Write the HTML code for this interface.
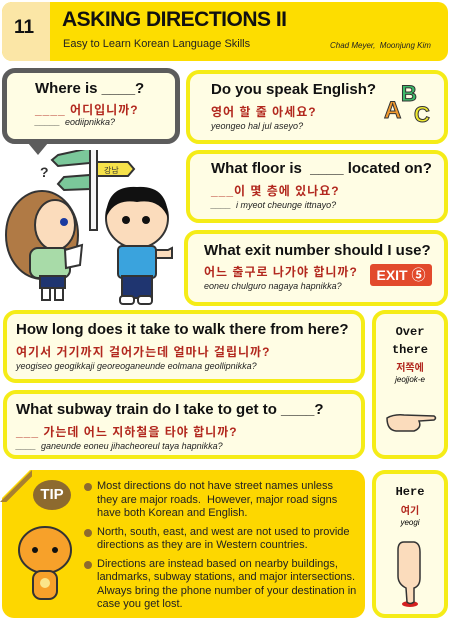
<!DOCTYPE html>
<html><head><meta charset="utf-8"><style>
body{margin:0;width:450px;height:621px;background:#fff;position:relative;overflow:hidden;font-family:"Liberation Sans","Noto Sans CJK KR",sans-serif}
.a{position:absolute;box-sizing:border-box}
.card{position:absolute;box-sizing:border-box;background:#fffde4;border:4px solid #f5ec17;border-radius:13px}
.en{position:absolute;font-weight:bold;color:#111;white-space:nowrap}
.ko{position:absolute;color:#b2281e;font-size:12px;white-space:nowrap;letter-spacing:1px;font-weight:bold}
.ro{position:absolute;font-style:italic;font-size:9px;color:#222;white-space:nowrap}
.mono{font-family:"Liberation Mono",monospace;font-weight:bold}
</style></head><body>
<div class="a" style="left:2px;top:2px;width:446px;height:59px;background:#fddd00;border-radius:10px"></div>
<div class="a" style="left:2px;top:2px;width:48px;height:59px;background:#fbe6a6;border-radius:10px 0 0 10px"></div>
<div class="en" style="left:14px;top:17px;font-size:19px">11</div>
<div class="en" style="left:62px;top:8px;font-size:21px;letter-spacing:-0.5px">ASKING DIRECTIONS II</div>
<div class="a" style="left:63px;top:38px;font-size:11px;color:#222">Easy to Learn Korean Language Skills</div>
<div class="a" style="left:330px;top:41px;font-size:8px;font-style:italic;color:#222">Chad Meyer,&nbsp; Moonjung Kim</div>

<div class="card" style="left:2px;top:68px;width:178px;height:76px;border:5px solid #5c5c5c;background:#fffde4"></div>
<div class="a" style="left:28px;top:143px;width:0;height:0;border-left:10px solid transparent;border-right:10px solid transparent;border-top:12px solid #5c5c5c"></div>
<div class="en" style="left:35px;top:80px;font-size:15px">Where is ____?</div>
<div class="ko" style="left:35px;top:101px">____ 어디입니까?</div>
<div class="ro" style="left:35px;top:117px">_____&nbsp; eodiipnikka?</div>

<div class="card" style="left:186px;top:70px;width:262px;height:74px"></div>
<div class="en" style="left:211px;top:81px;font-size:15px">Do you speak English?</div>
<div class="ko" style="left:211px;top:103px">영어 할 줄 아세요?</div>
<div class="ro" style="left:211px;top:121px">yeongeo hal jul aseyo?</div>
<div class="en" style="left:384px;top:97px;font-size:24px;color:#f29a2e;-webkit-text-stroke:1px #333">A</div>
<div class="en" style="left:401px;top:81px;font-size:22px;color:#3dbb6a;-webkit-text-stroke:1px #333">B</div>
<div class="en" style="left:414px;top:102px;font-size:22px;color:#f0ea30;-webkit-text-stroke:1px #333">C</div>

<div class="card" style="left:186px;top:150px;width:262px;height:73px"></div>
<div class="en" style="left:211px;top:160px;font-size:15px">What floor is &nbsp;____ located on?</div>
<div class="ko" style="left:211px;top:182px">___이 몇 층에 있나요?</div>
<div class="ro" style="left:211px;top:200px">____&nbsp; i myeot cheunge ittnayo?</div>

<div class="card" style="left:184px;top:230px;width:264px;height:76px"></div>
<div class="en" style="left:204px;top:242px;font-size:15px">What exit number should I use?</div>
<div class="ko" style="left:204px;top:263px">어느 출구로 나가야 합니까?</div>
<div class="ro" style="left:204px;top:281px">eoneu chulguro nagaya hapnikka?</div>
<div class="a" style="left:370px;top:264px;width:62px;height:22px;background:#e24a2c;border-radius:3px;color:#fff;font-weight:bold;font-size:14px;text-align:center;line-height:22px">EXIT ⑤</div>

<svg class="a" style="left:0;top:150px" width="180" height="160" viewBox="0 0 180 160">
<rect x="90" y="-10" width="7" height="90" fill="#f5f5f5" stroke="#333" stroke-width="2"/>
<path d="M58 5 L90 -2 L90 13 L58 16 L52 10Z" fill="#7bc79a" stroke="#333" stroke-width="2"/>
<path d="M97 12 L128 12 L134 19 L128 26 L97 26Z" fill="#f6e24a" stroke="#333" stroke-width="2"/>
<text x="104" y="23" font-size="8" fill="#333" font-family="Noto Sans CJK KR">강남</text>
<path d="M64 27 L90 25 L90 39 L64 40 L58 34Z" fill="#7bc79a" stroke="#333" stroke-width="2"/>
<text x="40" y="27" font-size="14" font-weight="bold" fill="#333">?</text>
<ellipse cx="42" cy="85" rx="36" ry="44" fill="#b07a45" stroke="#333" stroke-width="2"/>
<ellipse cx="55" cy="75" rx="20" ry="25" fill="#fbdcbc" stroke="#333" stroke-width="2"/>
<circle cx="64" cy="72" r="4" fill="#1a3aa0"/>
<rect x="30" y="98" width="40" height="30" rx="8" fill="#a8dba8" stroke="#333" stroke-width="2"/>
<rect x="40" y="126" width="25" height="12" fill="#1f3570" stroke="#333" stroke-width="2"/>
<rect x="42" y="138" width="8" height="12" fill="#fff" stroke="#333" stroke-width="2"/>
<rect x="55" y="138" width="8" height="12" fill="#fff" stroke="#333" stroke-width="2"/>
<path d="M65 100 L82 95 L80 115 L66 118Z" fill="#fff" stroke="#333" stroke-width="2"/>
<ellipse cx="137" cy="68" rx="31" ry="30" fill="#fbdcbc" stroke="#333" stroke-width="2"/>
<path d="M106 68 Q106 35 137 37 Q168 35 168 68 Q160 48 137 52 Q114 48 106 68Z" fill="#111"/>
<circle cx="126" cy="70" r="4" fill="#111"/><circle cx="146" cy="70" r="4" fill="#111"/>
<rect x="118" y="96" width="38" height="32" rx="4" fill="#3aa3dd" stroke="#333" stroke-width="2"/>
<path d="M156 100 L168 100 L172 98 L172 108 L156 108Z" fill="#fbdcbc" stroke="#333" stroke-width="2"/>
<rect x="122" y="126" width="30" height="22" fill="#1f3570" stroke="#333" stroke-width="2"/>
<rect x="120" y="146" width="14" height="8" rx="3" fill="#fff" stroke="#333" stroke-width="2"/>
<rect x="138" y="146" width="14" height="8" rx="3" fill="#fff" stroke="#333" stroke-width="2"/>
</svg>

<div class="card" style="left:3px;top:310px;width:362px;height:73px"></div>
<div class="en" style="left:16px;top:321px;font-size:15px">How long does it take to walk there from here?</div>
<div class="ko" style="left:16px;top:343px">여기서 거기까지 걸어가는데 얼마나 걸립니까?</div>
<div class="ro" style="left:16px;top:361px">yeogiseo geogikkaji georeoganeunde eolmana geollipnikka?</div>

<div class="card" style="left:3px;top:390px;width:362px;height:69px"></div>
<div class="en" style="left:16px;top:401px;font-size:15px">What subway train do I take to get to ____?</div>
<div class="ko" style="left:16px;top:423px">___ 가는데 어느 지하철을 타야 합니까?</div>
<div class="ro" style="left:16px;top:441px">____&nbsp; ganeunde eoneu jihacheoreul taya hapnikka?</div>

<div class="card" style="left:372px;top:310px;width:76px;height:149px"></div>
<div class="a mono" style="left:372px;top:323px;width:76px;text-align:center;font-size:12px;line-height:18px;color:#111">Over<br>there</div>
<div class="a" style="left:372px;top:359px;width:76px;text-align:center;font-size:10px;color:#b2281e;font-weight:bold">저쪽에</div>
<div class="a" style="left:372px;top:375px;width:76px;text-align:center;font-size:8px;font-style:italic">jeojjok-e</div>
<svg class="a" style="left:384px;top:410px" width="55" height="25"><path d="M3 8 Q10 4 20 5 L50 6 Q53 8 50 10 L35 11 Q38 18 30 21 L12 21 Q3 20 3 8Z" fill="#fbdcbc" stroke="#333" stroke-width="1.5"/></svg>

<div class="a" style="left:2px;top:470px;width:363px;height:148px;background:#fdd700;border-radius:12px"></div>
<div class="a" style="left:0;top:470px;width:30px;height:30px;background:#fff;clip-path:polygon(0 0,100% 0,0 100%)"></div>
<div class="a" style="left:0;top:470px;width:32px;height:32px;background:#a88030;clip-path:polygon(100% 0,0 100%,20% 100%,100% 20%)"></div>
<div class="a" style="left:33px;top:480px;width:38px;height:30px;background:#8d6a2f;border-radius:50%;color:#fff;font-weight:bold;font-size:15px;text-align:center;line-height:30px">TIP</div>
<svg class="a" style="left:15px;top:515px" width="60" height="100">
<ellipse cx="30" cy="35" rx="26" ry="23" fill="#f7a12a" stroke="#333" stroke-width="2"/>
<circle cx="20" cy="35" r="3" fill="#111"/><circle cx="40" cy="35" r="3" fill="#111"/>
<rect x="18" y="56" width="24" height="28" rx="8" fill="#f7a12a" stroke="#333" stroke-width="2"/>
<circle cx="30" cy="68" r="5" fill="#fbe58a"/>
</svg>
<div class="a" style="left:84px;top:480px;width:278px;font-size:11px;line-height:13.5px;color:#222">
<div style="position:relative;padding-left:13px;margin-bottom:5px"><span style="position:absolute;left:0;top:3px;width:8px;height:8px;border-radius:50%;background:#8d6a2f"></span>Most directions do not have street names unless<br>they are major roads.&nbsp; However, major road signs have both Korean and English.</div>
<div style="position:relative;padding-left:13px;margin-bottom:5px"><span style="position:absolute;left:0;top:3px;width:8px;height:8px;border-radius:50%;background:#8d6a2f"></span>North, south, east, and west are not used to provide directions as they are in Western countries.</div>
<div style="position:relative;padding-left:13px"><span style="position:absolute;left:0;top:3px;width:8px;height:8px;border-radius:50%;background:#8d6a2f"></span>Directions are instead based on nearby buildings, landmarks, subway stations, and major intersections. Always bring the phone number of your destination in case you get lost.</div>
</div>

<div class="card" style="left:372px;top:470px;width:76px;height:148px"></div>
<div class="a mono" style="left:372px;top:485px;width:76px;text-align:center;font-size:12px;color:#111">Here</div>
<div class="a" style="left:372px;top:502px;width:76px;text-align:center;font-size:10px;color:#b2281e;font-weight:bold">여기</div>
<div class="a" style="left:372px;top:518px;width:76px;text-align:center;font-size:8px;font-style:italic">yeogi</div>
<svg class="a" style="left:390px;top:540px" width="40" height="70">
<ellipse cx="20" cy="64" rx="8" ry="3" fill="#d42020"/>
<path d="M8 10 Q8 2 14 2 L24 2 Q30 3 30 12 L30 38 Q30 46 24 48 L24 62 Q20 65 17 62 L16 48 Q8 44 8 36Z" fill="#fbdcbc" stroke="#333" stroke-width="1.5"/>
</svg>
</body></html>
